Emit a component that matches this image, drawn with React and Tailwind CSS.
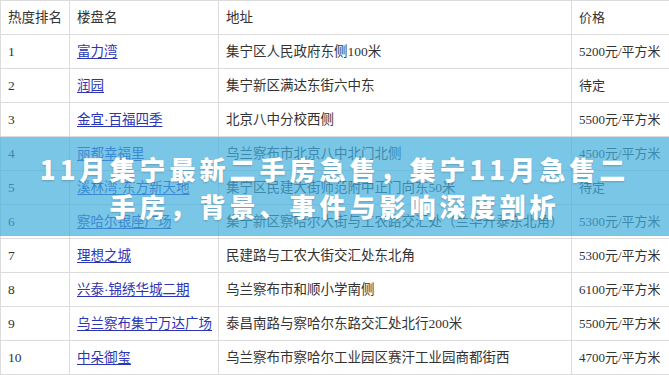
const rows = [
  { rank: "1", name: "富力湾", addr: "集宁区人民政府东侧100米", price: "5200元/平方米" },
  { rank: "2", name: "润园", addr: "集宁新区满达东街六中东", price: "待定" },
  { rank: "3", name: "金宜·百福四季", addr: "北京八中分校西侧", price: "5500元/平方米" },
  { rank: "4", name: "丽都幸福里", addr: "乌兰察布市北京八中北门北侧", price: "4500元/平方米" },
  { rank: "5", name: "溪林湾·东方新天地", addr: "集宁区民建大街师范附中正门向东50米", price: "待定" },
  { rank: "6", name: "察哈尔银座广场", addr: "集宁新区察哈尔大街与工农路交汇处（兰华升泰东北角）", price: "5300元/平方米" },
  { rank: "7", name: "理想之城", addr: "民建路与工农大街交汇处东北角", price: "5300元/平方米" },
  { rank: "8", name: "兴泰·锦绣华城二期", addr: "乌兰察布市和顺小学南侧", price: "6100元/平方米" },
  { rank: "9", name: "乌兰察布集宁万达广场", addr: "泰昌南路与察哈尔东路交汇处北行200米", price: "5500元/平方米" },
  { rank: "10", name: "中朵御玺", addr: "乌兰察布市察哈尔工业园区赛汗工业园商都街西", price: "4700元/平方米" },
];

const cell = "border border-[#dcdcdc] h-[34px] px-[7px] py-0 align-middle whitespace-nowrap overflow-hidden";

export default function App() {
  return (
    <div
      className="relative w-[669px] h-[375px] overflow-hidden bg-white text-[#333]"
      style={{ fontFamily: '"Liberation Serif", "Noto Sans CJK SC", serif' }}
    >
      <table className="table-fixed border-collapse w-[669px] text-[13.5px] leading-none">
        <colgroup>
          <col className="w-[69px]" />
          <col className="w-[149px]" />
          <col className="w-[353px]" />
          <col className="w-[98px]" />
        </colgroup>
        <thead>
          <tr>
            <th className={`${cell} text-left font-normal`}>热度排名</th>
            <th className={`${cell} text-left font-normal`}>楼盘名</th>
            <th className={`${cell} text-left font-normal`}>地址</th>
            <th className={`${cell} text-left font-normal text-[13px]`}>价格</th>
          </tr>
        </thead>
        <tbody>
          {rows.map((r) => (
            <tr key={r.rank}>
              <td className={cell}>{r.rank}</td>
              <td className={cell}>
                <a href="#" className="text-[#2c35b5] underline underline-offset-2">
                  {r.name}
                </a>
              </td>
              <td className={cell}>{r.addr}</td>
              <td className={`${cell} text-[13px]`}>{r.price}</td>
            </tr>
          ))}
        </tbody>
      </table>

      <div className="absolute left-0 right-0 top-[137px] h-[99px] bg-[#41aedd]/70 flex items-center justify-center">
        <h1
          className="text-center text-white font-black text-[26px] leading-[37px] tracking-[4px] [text-shadow:0_1px_2px_rgba(0,0,0,0.2)]"
          style={{ fontFamily: '"Noto Sans CJK SC", "Noto Sans", sans-serif' }}
        >
          11月集宁最新二手房急售，集宁11月急售二
          <br />
          手房，背景、事件与影响深度剖析
        </h1>
      </div>
    </div>
  );
}
